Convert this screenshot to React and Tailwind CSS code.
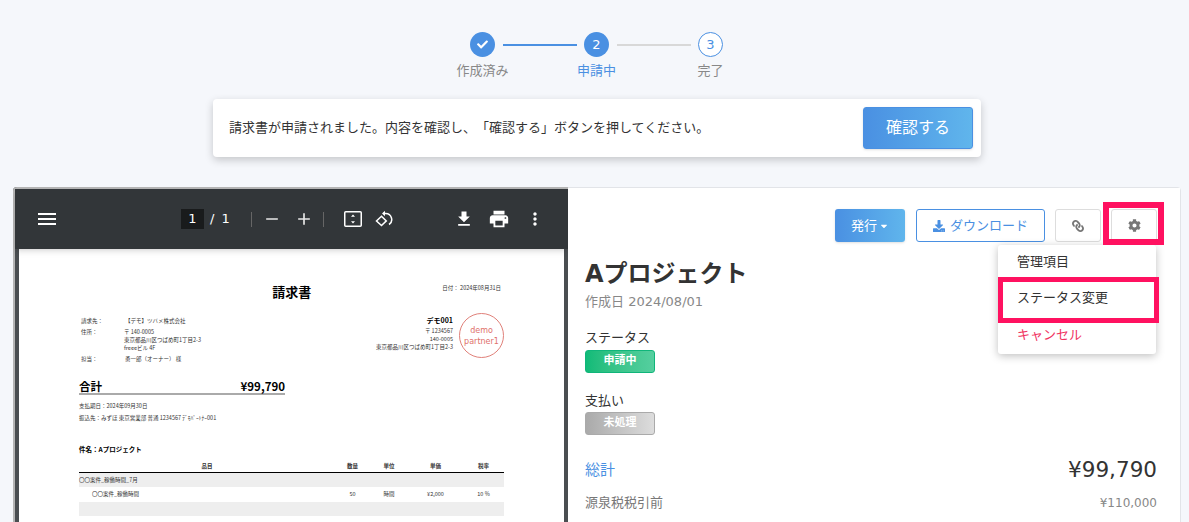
import { FaCheck, FaCog, FaDownload, FaLink, FaCaretDown } from 'react-icons/fa'
import { MdMenu, MdRemove, MdAdd, MdFileDownload, MdPrint, MdMoreVert } from 'react-icons/md'

const font = { fontFamily: '"DejaVu Sans", "Noto Sans CJK JP", sans-serif' }

const rows = [
  { name: '〇〇案件_稼働時間_7月', shaded: true },
  { name: '〇〇案件_稼働時間', indent: true, qty: '50', unit: '時間', price: '¥2,000', tax: '10 %' },
  { shaded: true },
]

const Step = ({ label, active, done, upcoming, num }) => (
  <div className="flex flex-col items-center w-[25px]">
    {done && (
      <div className="w-[25px] h-[25px] rounded-full bg-[#4a90e2] flex items-center justify-center text-white">
        <FaCheck size={11} />
      </div>
    )}
    {active && (
      <div className="w-[25px] h-[25px] rounded-full bg-[#4a90e2] flex items-center justify-center text-white text-[13px]">
        {num}
      </div>
    )}
    {upcoming && (
      <div className="w-[25px] h-[25px] rounded-full bg-white border border-[#4a90e2] flex items-center justify-center text-[#4a90e2] text-[13px]">
        {num}
      </div>
    )}
    <span className={`mt-[5px] text-[13px] leading-[18px] whitespace-nowrap ${active ? 'text-[#4a90e2]' : 'text-[#888]'}`}>
      {label}
    </span>
  </div>
)

const Toolbar = () => (
  <div className="h-[60px] bg-[#323639] flex items-center text-white shadow-md relative">
    <MdMenu size={24} className="ml-[20px]" />
    <div className="ml-[122px] w-[23px] h-[20px] bg-[#191b1c] flex items-center justify-center text-[13px]">1</div>
    <span className="ml-[6px] text-[13px]">/</span>
    <span className="ml-[7px] text-[13px]">1</span>
    <div className="ml-[21px] w-px h-[15px] bg-[#666]" />
    <MdRemove size={20} className="ml-[10px] text-[#e8e8e8]" />
    <MdAdd size={20} className="ml-[12px] text-[#e8e8e8]" />
    <div className="ml-[9px] w-px h-[15px] bg-[#666]" />
    <svg width="18" height="16" viewBox="0 0 18 16" className="ml-[20px]" fill="none" stroke="white">
      <rect x="0.75" y="0.75" width="16.5" height="14.5" rx="1" strokeWidth="1.5" />
      <path d="M9 3.5l2 2.2H7zM9 12.5l2-2.2H7z" fill="white" stroke="none" />
    </svg>
    <svg width="18" height="18" viewBox="0 0 18 18" className="ml-[13px]" fill="none" stroke="white" strokeWidth="1.5">
      <path d="M6.5 6.2L1.5 11l5 4.5 4.8-4.6z" />
      <path d="M8 3.5h2.5a6 6 0 0 1 3.5 11" />
      <path d="M10 0.8L7 3.5l3 2.7" fill="white" stroke="none" />
    </svg>
    <MdFileDownload size={20} className="ml-[61px]" />
    <MdPrint size={22} className="ml-[14px]" />
    <MdMoreVert size={20} className="ml-[15px]" />
  </div>
)

const InvoicePage = () => (
  <div className="mx-[4px] bg-white h-[300px] px-[60px] text-[#333] text-[5.5px] leading-[8px] overflow-hidden" style={{ fontFamily: '"Noto Sans CJK JP", sans-serif' }}>
    <div className="flex mt-[33px] h-[20px] items-start">
      <div className="flex-1" />
      <div className="text-[13px] leading-[20px] font-bold text-black ml-[66px] w-[170px]">請求書</div>
      <div className="mt-[2px] pr-[3px] whitespace-nowrap">日付： 2024年08月31日</div>
    </div>
    <div className="flex justify-between mt-[15px] h-[52px]">
      <div className="pl-[2px]">
        <div className="flex h-[11px]">
          <span className="w-[44px]">請求先：</span>
          <span>【デモ】ツバメ株式会社</span>
        </div>
        <div className="flex">
          <span className="w-[43px]">住所：</span>
          <div>
            <div>〒 140-0005</div>
            <div>東京都品川区つばめ町1丁目2-3</div>
            <div>freeeビル 4F</div>
          </div>
        </div>
        <div className="flex mt-[3px]">
          <span className="w-[44px]">担当：</span>
          <span>勇一郎（オーナー） 様</span>
        </div>
      </div>
      <div className="flex mt-[-4px]">
        <div className="text-right mt-[2px]">
          <div className="text-[7px] leading-[10px] font-bold text-black mb-[2px]">デモ001</div>
          <div>〒 1234567</div>
          <div>140-0005</div>
          <div>東京都品川区つばめ町1丁目2-3</div>
        </div>
        <div className="ml-[6px] w-[45px] h-[45px] rounded-full border border-[#e08079] flex flex-col items-center justify-center text-[#e0706a] text-[8px] leading-[11px]" style={font}>
          <span>demo</span>
          <span>partner1</span>
        </div>
      </div>
    </div>
    <div className="w-[206px] mt-[10px] flex justify-between items-center h-[16px] border-b-[2px] border-[#aaa] text-[11.5px] font-bold text-black">
      <span>合計</span>
      <span>¥99,790</span>
    </div>
    <div className="mt-[7px]">支払期日：2024年09月30日</div>
    <div className="mt-[4px]">振込先：みずほ 東京営業部 普通 1234567 ﾃﾞﾓﾊﾟｰﾄﾅｰ001</div>
    <div className="mt-[22px] text-[6.5px] leading-[10px] font-bold text-black">件名：Aプロジェクト</div>
    <div className="mt-[8px] border-b border-black grid grid-cols-[256px_35px_38px_55px_41px] text-center font-bold h-[11px]">
      <span>品目</span>
      <span>数量</span>
      <span>単位</span>
      <span>単価</span>
      <span>税率</span>
    </div>
    {rows.map((row, i) => (
      <div key={i} className={`grid grid-cols-[256px_35px_38px_55px_41px] items-center text-center h-[14.3px] ${row.shaded ? 'bg-[#eee]' : ''}`}>
        <span className={`text-left ${row.indent ? 'pl-[13px]' : ''}`}>{row.name}</span>
        <span>{row.qty}</span>
        <span>{row.unit}</span>
        <span>{row.price}</span>
        <span>{row.tax}</span>
      </div>
    ))}
  </div>
)

const App = () => {
  return (
    <div className="h-[522px] overflow-hidden bg-[#f5f7fb] pl-[13px] pr-[8px] pt-[32px] text-[#333] [text-spacing-trim:space-all]" style={font}>
      {/* stepper */}
      <div className="flex justify-center items-start mr-[1px]">
        <Step done label="作成済み" />
        <div className="w-[74px] h-[2px] bg-[#4a90e2] mt-[12px] ml-[8px] mr-[7px]" />
        <Step active num="2" label="申請中" />
        <div className="w-[74px] h-[2px] bg-[#d8d8d8] mt-[12px] ml-[8px] mr-[7px]" />
        <Step upcoming num="3" label="完了" />
      </div>

      {/* notice */}
      <div className="mt-[19px] mx-auto w-[768px] h-[58px] bg-white rounded-[4px] shadow-[0_3px_8px_rgba(0,0,0,0.2)] flex items-center justify-between pl-[16px] pr-[8px]">
        <p className="text-[13px] pb-[1px]">請求書が申請されました。内容を確認し、「確認する」ボタンを押してください。</p>
        <button className="w-[110px] h-[42px] rounded-[3px] text-white text-[16px] bg-gradient-to-r from-[#4a90e2] to-[#60b5ec] shadow-sm border border-[#4a90e2]">
          確認する
        </button>
      </div>

      {/* main card */}
      <div className="mt-[30px] h-[400px] rounded-[4px] flex overflow-hidden">
        <div className="w-[555px] h-full shrink-0 border-l-2 border-t-2 border-[#b4b4b4] bg-[#4a4e51]">
          <Toolbar />
          <InvoicePage />
        </div>

        <div className="flex-1 bg-white border border-l-0 border-[#e2e4e8] pl-[17px] pr-[23px] pt-[21px] relative">
          <div className="flex justify-end gap-[10px] h-[33px] text-[13px]">
            <button className="w-[70px] mr-[1px] rounded-[3px] text-white bg-gradient-to-r from-[#4a90e2] to-[#60b5ec] shadow-sm flex items-center justify-center gap-[2px]">
              発行 <FaCaretDown size={10} />
            </button>
            <button className="w-[129px] rounded-[3px] text-[#4a90e2] bg-white border border-[#4a90e2] flex items-center justify-center gap-[5px]">
              <FaDownload size={12} /> ダウンロード
            </button>
            <button className="w-[46px] rounded-[3px] bg-white border border-[#ddd] flex items-center justify-center text-[#777]">
              <FaLink size={12} className="-scale-x-100" />
            </button>
            <button className="w-[46px] rounded-[3px] bg-white border border-[#ddd] flex items-center justify-center text-[#777]">
              <FaCog size={13} />
            </button>
          </div>

          <h1 className="mt-[16px] text-[24px] leading-[32px] font-bold text-[#333]">Aプロジェクト</h1>
          <p className="mt-[2px] text-[13px] leading-[20px] text-[#888]">作成日 2024/08/01</p>

          <p className="mt-[16px] text-[13px] leading-[20px]">ステータス</p>
          <div className="mt-[2px] w-[70px] h-[23px] rounded-[3px] border border-[#10b57a] bg-gradient-to-r from-[#0fbb78] to-[#55cf9f] text-white text-[11px] font-bold flex items-center justify-center">
            申請中
          </div>

          <p className="mt-[18px] text-[13px] leading-[20px]">支払い</p>
          <div className="mt-[1px] w-[70px] h-[23px] rounded-[3px] border border-[#aaa] bg-gradient-to-r from-[#aaa] to-[#ddd] text-white text-[11px] font-bold flex items-center justify-center">
            未処理
          </div>

          <div className="mt-[22px] flex justify-between items-center h-[26px]">
            <span className="text-[15px] text-[#4a90e2]">総計</span>
            <span className="text-[21.5px] text-[#333]">¥99,790</span>
          </div>
          <div className="mt-[10px] flex justify-between items-center h-[20px]">
            <span className="text-[13px] text-[#777]">源泉税税引前</span>
            <span className="text-[12px] text-[#888]">¥110,000</span>
          </div>

          {/* dropdown */}
          <div className="absolute left-[430px] top-[57px] w-[158px] h-[109px] bg-white rounded-[3px] shadow-[0_2px_8px_rgba(0,0,0,0.25)] text-[13px] flex flex-col justify-center pl-[19px]">
            <div className="h-[36px] leading-[33px]">管理項目</div>
            <div className="h-[36px] leading-[34px]">ステータス変更</div>
            <div className="h-[37px] leading-[36px] text-[#f0325f]">キャンセル</div>
          </div>

          {/* highlight boxes */}
          <div className="absolute left-[535px] top-[14px] w-[61px] h-[43px] border-[6px] border-[#ff1160]" />
          <div className="absolute left-[430px] top-[89px] w-[161px] h-[46px] border-[5px] border-[#ff1160]" />
        </div>
      </div>
    </div>
  )
}

export default App
